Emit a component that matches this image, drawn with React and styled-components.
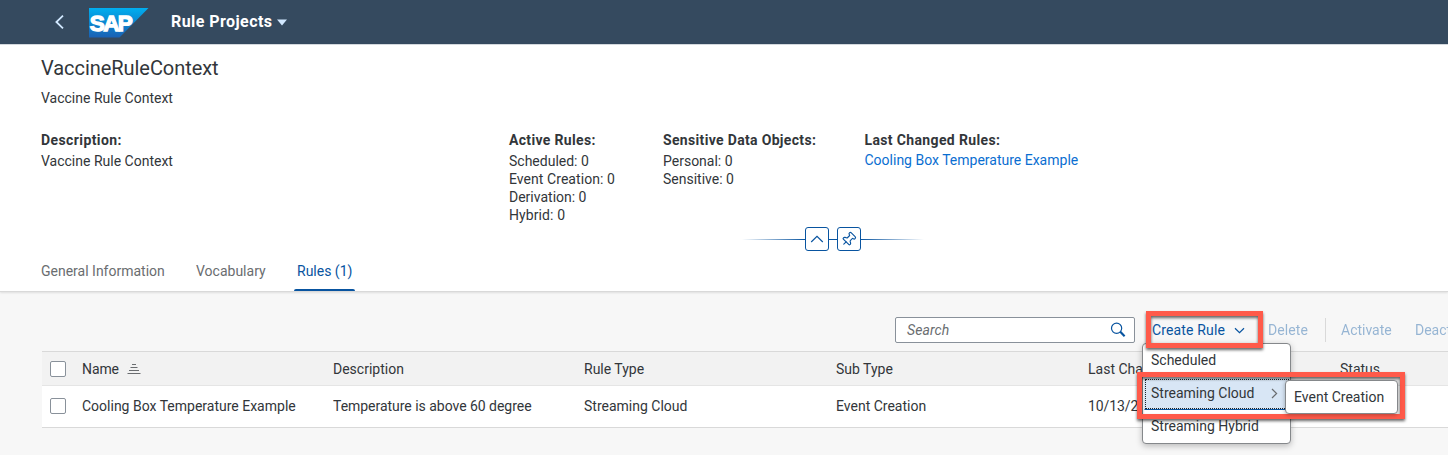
import React from "react";
import styled, { createGlobalStyle, css } from "styled-components";
import { Pin } from "lucide-react";

const Global = createGlobalStyle`
  * { box-sizing: border-box; }
  body {
    margin: 0;
    overflow: hidden;
    background: #f7f7f7;
    color: #32363a;
    font-family: Roboto, "Noto Sans", sans-serif;
    font-size: 14px;
  }
`;

const Page = styled.div`
  position: relative;
  width: 1448px;
  height: 455px;
  overflow: hidden;
  display: flex;
  flex-direction: column;
`;

const Txt = styled.span`
  white-space: nowrap;
  letter-spacing: ${(p) => p.$ls ?? 0}px;
`;

const Shell = styled.header`
  display: flex;
  align-items: center;
  flex: none;
  height: 44px;
  padding-left: 54px;
  background: #354a5f;
  color: #fff;
`;

const BackIcon = styled.svg`
  width: 10px;
  height: 16px;
  flex: none;
`;

const Logo = styled.svg`
  width: 60px;
  height: 30px;
  margin: 2px 0 0 25px;
  flex: none;
`;

const ShellTitle = styled.div`
  display: flex;
  align-items: center;
  gap: 5px;
  margin-left: 22px;
  font-size: 16px;
  font-weight: 700;
  line-height: 20px;
`;

const ObjectHeader = styled.section`
  flex: none;
  height: 248px;
  padding: 11px 0 0 41px;
  background: #fff;
  border-top: 1px solid #d3d8dd;
  border-bottom: 1px solid #d9d9d9;
  box-shadow: 0 1px 2px rgba(0, 0, 0, 0.1);
`;

const Title = styled.h1`
  margin: 0;
  font-size: 20px;
  font-weight: 400;
  line-height: 24px;
`;

const Subtitle = styled.div`
  margin-top: 9px;
  line-height: 18px;
`;

const Facets = styled.div`
  display: grid;
  grid-template-columns: 468px 154px 201.5px 1fr;
  height: 96px;
  margin-top: 24px;
`;

const Facet = styled.div`
  display: flex;
  flex-direction: column;
  line-height: 18px;
`;

const FacetLabel = styled.div`
  margin-bottom: 3px;
  font-weight: 700;
`;

const Link = styled.a`
  margin-top: -1px;
  color: #0a6ed1;
`;

const Snap = styled.div`
  display: flex;
  align-items: center;
  height: 24px;
  margin-left: 701px;
`;

const SnapLine = styled.div`
  width: ${(p) => p.$w}px;
  height: 1px;
  background: ${(p) =>
    p.$to ? `linear-gradient(to ${p.$to}, rgba(8,84,160,0), #0854a0)` : "#0854a0"};
`;

const SnapButton = styled.button`
  display: flex;
  align-items: center;
  justify-content: center;
  width: 24px;
  height: 24px;
  padding: 0;
  border: 1px solid #0854a0;
  border-radius: 3px;
  background: #fff;
`;

const PinIcon = styled(Pin)`
  transform: translate(-0.5px, 0.5px) rotate(45deg);
`;

const Tabs = styled.nav`
  display: flex;
  height: 40px;
`;

const Tab = styled.div`
  display: flex;
  flex-direction: column;
  justify-content: space-between;
  width: ${(p) => p.$w}px;
  padding-top: 11px;
  line-height: 18px;
  color: ${(p) => (p.$active ? "#0854a0" : "#6a6d70")};
`;

const TabLine = styled.div`
  width: 61px;
  height: 2px;
  margin-left: -3px;
  border-radius: 2px 2px 0 0;
  background: #0854a0;
`;

const Toolbar = styled.div`
  display: flex;
  align-items: center;
  flex: none;
  height: 59px;
  padding: 17px 0 0 895px;
`;

const SearchField = styled.div`
  display: flex;
  align-items: center;
  justify-content: space-between;
  flex: none;
  width: 240px;
  height: 26px;
  padding: 0 8px 0 11px;
  border: 1px solid #89919a;
  border-radius: 2px;
  background: #fff;
  color: #6a6d70;
  font-style: italic;
`;

const Action = styled.div`
  display: flex;
  align-items: center;
  flex: none;
  gap: 9px;
  margin-left: ${(p) => p.$ml}px;
  width: ${(p) => p.$w}px;
  color: #0854a0;
  opacity: ${(p) => (p.$disabled ? 0.4 : 1)};
`;

const Separator = styled.div`
  flex: none;
  width: 1px;
  height: 24px;
  background: #d9d9d9;
`;

const Table = styled.div`
  flex: none;
  width: 1407px;
  margin-left: 42px;
  border-top: 1px solid #d9d9d9;
  border-bottom: 1px solid #d9d9d9;
`;

const Row = styled.div`
  display: grid;
  grid-template-columns: 40px 251px 251px 252px 252px 252px 1fr;
  align-items: center;
  ${(p) =>
    p.$head
      ? css`
          height: 34px;
          background: #f2f2f2;
          border-bottom: 1px solid #e5e5e5;
        `
      : css`
          height: 41px;
          padding-bottom: 1px;
          background: #fff;
        `}
`;

const Cell = styled.div`
  display: flex;
  align-items: center;
  gap: 8px;
  overflow: hidden;
`;

const Check = styled.div`
  width: 16px;
  height: 16px;
  margin-left: 8px;
  border: 1px solid #89919a;
  border-radius: 2px;
  background: #fff;
`;

const Menu = styled.div`
  position: absolute;
  left: 1142px;
  top: 343px;
  width: 149px;
  height: 101px;
  overflow: hidden;
  border: 1px solid #85888b;
  border-radius: 4px;
  background: #fff;
  box-shadow: 0 2px 6px rgba(0, 0, 0, 0.25);
`;

const MenuItem = styled.div`
  display: flex;
  align-items: center;
  justify-content: space-between;
  height: 33px;
  padding: 0 12px 2px 8px;
  ${(p) =>
    p.$selected &&
    css`
      padding: 0 11px 2px 6px;
      height: 32px;
      margin: 1px 0 0 1px;
      outline: 1px dotted #222;
      outline-offset: -2px;
      background: #d8e6f5;
      border: 1px solid #d8e6f5;
      border-bottom: 1px solid #0854a0;
    `}
`;

const SubMenu = styled.div`
  position: absolute;
  left: 1285px;
  top: 380px;
  width: 113px;
  height: 34px;
  padding-left: 8px;
  line-height: 32px;
  border: 1px solid #85888b;
  border-radius: 4px;
  background: #fff;
  box-shadow: 0 1px 4px rgba(0, 0, 0, 0.3);
`;

const Highlight = styled.div`
  position: absolute;
  left: ${(p) => p.$x}px;
  top: ${(p) => p.$y}px;
  width: ${(p) => p.$w}px;
  height: ${(p) => p.$h}px;
  border: 5px solid #ff5a4a;
  filter: drop-shadow(0.5px 2px 1.5px rgba(0, 0, 0, 0.6));
`;

const Stroke = ({ w, h, d, color = "#0854a0", sw = 1.2 }) => (
  <svg width={w} height={h} viewBox={`0 0 ${w} ${h}`} fill="none" stroke={color} strokeWidth={sw}>
    <path d={d} />
  </svg>
);

export default function App() {
  return (
    <Page>
      <Global />
      <Shell>
        <BackIcon viewBox="0 0 10 16" fill="none" stroke="#d1e8ff" strokeWidth="1.8">
          <path d="M9 1.6 2.4 8 9 14.4" />
        </BackIcon>
        <Logo viewBox="0 0 60 30">
          <defs>
            <linearGradient id="sap" x1="0" y1="0" x2="0" y2="1">
              <stop offset="0" stopColor="#00aeef" />
              <stop offset="0.5" stopColor="#0c87d0" />
              <stop offset="1" stopColor="#1a61b4" />
            </linearGradient>
          </defs>
          <path d="M0 0H59.5L30.5 29.5H0Z" fill="url(#sap)" />
          <text
            x="0.8"
            y="22.6"
            fill="#fff"
            stroke="#fff"
            strokeWidth="1.3"
            fontFamily="Liberation Sans, sans-serif"
            fontWeight="700"
            fontSize="22.5"
            letterSpacing="-1.6"
          >
            SAP
          </text>
        </Logo>
        <ShellTitle>
          <Txt $ls={0.43}>Rule Projects</Txt>
          <svg width="10" height="7" viewBox="0 0 10 7">
            <path d="M0 0.4H10L5 6.6Z" fill="#d1e8ff" />
          </svg>
        </ShellTitle>
      </Shell>

      <ObjectHeader>
        <Title>
          <Txt $ls={-0.05}>VaccineRuleContext</Txt>
        </Title>
        <Subtitle>
          <Txt>Vaccine Rule Context</Txt>
        </Subtitle>
        <Facets>
          <Facet>
            <FacetLabel><Txt $ls={0.4}>Description:</Txt></FacetLabel>
            <Txt>Vaccine Rule Context</Txt>
          </Facet>
          <Facet>
            <FacetLabel><Txt $ls={0.33}>Active Rules:</Txt></FacetLabel>
            <div><Txt>Scheduled: 0</Txt></div>
            <div><Txt $ls={0.06}>Event Creation: 0</Txt></div>
            <div><Txt>Derivation: 0</Txt></div>
            <div><Txt $ls={0.1}>Hybrid: 0</Txt></div>
          </Facet>
          <Facet>
            <FacetLabel><Txt $ls={0.33}>Sensitive Data Objects:</Txt></FacetLabel>
            <div><Txt>Personal: 0</Txt></div>
            <div><Txt>Sensitive: 0</Txt></div>
          </Facet>
          <Facet>
            <FacetLabel><Txt $ls={0.36}>Last Changed Rules:</Txt></FacetLabel>
            <Link><Txt>Cooling Box Temperature Example</Txt></Link>
          </Facet>
        </Facets>
        <Snap>
          <SnapLine $w={63} $to="right" />
          <SnapButton>
            <Stroke w={14} h={10} d="M1.2 8 7 2.4 12.8 8" />
          </SnapButton>
          <SnapLine $w={8} />
          <SnapButton>
            <PinIcon size={16} color="#0854a0" strokeWidth={1.7} />
          </SnapButton>
          <SnapLine $w={63} $to="left" />
        </Snap>
        <Tabs>
          <Tab $w={155}><Txt>General Information</Txt></Tab>
          <Tab $w={101}><Txt>Vocabulary</Txt></Tab>
          <Tab $w={61} $active>
            <Txt>Rules (1)</Txt>
            <TabLine />
          </Tab>
        </Tabs>
      </ObjectHeader>

      <Toolbar>
        <SearchField>
          <Txt $ls={0.1}>Search</Txt>
          <svg width="16" height="16" viewBox="0 0 16 16" fill="none" stroke="#0854a0">
            <circle cx="6.6" cy="6.2" r="5.1" strokeWidth="1.2" />
            <path d="M10.3 9.8 14.6 14.2" strokeWidth="2.2" />
          </svg>
        </SearchField>
        <Action $ml={17} $w={116}>
          <Txt $ls={0.15}>Create Rule</Txt>
          <Stroke w={11} h={7} d="M1 1.2 5.5 5.6 10 1.2" />
        </Action>
        <Action $ml={0} $w={57} $disabled><Txt $ls={0.1}>Delete</Txt></Action>
        <Separator />
        <Action $ml={15} $w={74} $disabled><Txt>Activate</Txt></Action>
        <Action $ml={0} $w={80} $disabled><Txt>Deactivate</Txt></Action>
      </Toolbar>

      <Table>
        <Row $head>
          <Check />
          <Cell>
            <Txt $ls={-0.1}>Name</Txt>
            <Stroke w={14} h={10} color="#6a6d70" sw={1} d="M5 0.5h4M3.5 3.5h7M2 6.5h10M0.5 9.5h13" />
          </Cell>
          <Cell><Txt>Description</Txt></Cell>
          <Cell><Txt>Rule Type</Txt></Cell>
          <Cell><Txt>Sub Type</Txt></Cell>
          <Cell><Txt>Last Cha</Txt></Cell>
          <Cell><Txt>Status</Txt></Cell>
        </Row>
        <Row>
          <Check />
          <Cell><Txt>Cooling Box Temperature Example</Txt></Cell>
          <Cell><Txt $ls={-0.03}>Temperature is above 60 degree</Txt></Cell>
          <Cell><Txt>Streaming Cloud</Txt></Cell>
          <Cell><Txt>Event Creation</Txt></Cell>
          <Cell><Txt $ls={-0.1}>10/13/20</Txt></Cell>
        </Row>
      </Table>

      <Menu>
        <MenuItem><Txt>Scheduled</Txt></MenuItem>
        <MenuItem $selected>
          <Txt>Streaming Cloud</Txt>
          <Stroke w={7} h={11} color="#6a6d70" d="M1 1 5.6 5.5 1 10" />
        </MenuItem>
        <MenuItem><Txt>Streaming Hybrid</Txt></MenuItem>
      </Menu>
      <Highlight $x={1146} $y={311} $w={117} $h={37} />
      <Highlight $x={1137} $y={372} $w={268} $h={47} />
      <SubMenu><Txt>Event Creation</Txt></SubMenu>
    </Page>
  );
}
